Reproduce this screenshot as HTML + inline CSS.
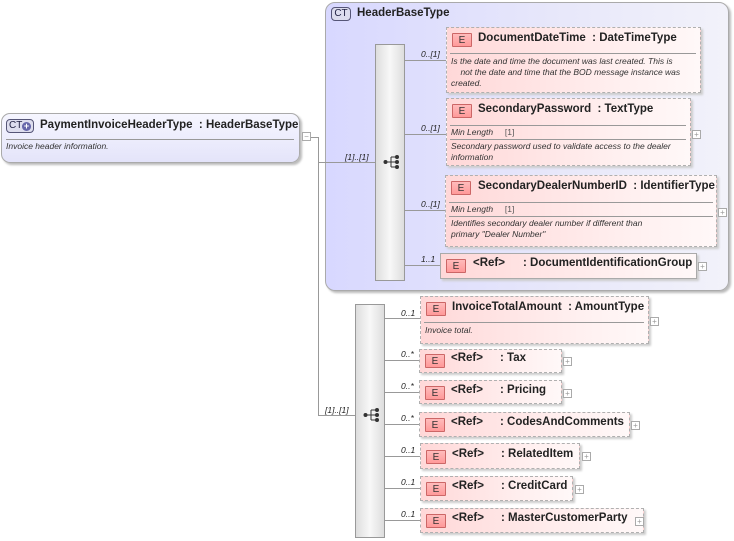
<!DOCTYPE html>
<html><head><meta charset="utf-8"><style>
body{margin:0;width:734px;height:541px;background:#fff;position:relative;overflow:hidden;font-family:"Liberation Sans",Arial,sans-serif;}
.a{position:absolute;}
.ln{position:absolute;background:#999;}
.el{position:absolute;box-sizing:border-box;border:1px dashed #b0b0b0;background:linear-gradient(to right,#ffd8d8,#fff0f0 70%,#fff8f8);box-shadow:2px 2px 2px #ccc;}
.el.s{border-style:solid;border-color:#aaa;}
.E{position:absolute;width:20px;height:14px;box-sizing:border-box;border:1px solid #c66;background:linear-gradient(#fbb,#f99);font-size:10px;text-align:center;line-height:13px;color:#333;border-radius:1px}
.t{position:absolute;font-size:11.5px;font-weight:bold;color:#222;white-space:nowrap;}
.d{position:absolute;font-size:8.5px;font-style:italic;color:#333;line-height:11px;white-space:nowrap;}
.hr{position:absolute;height:1px;background:#999;}
.lab{position:absolute;font-size:8.5px;font-style:italic;color:#222;}
.pl{position:absolute;width:7px;height:7px;border:1px solid #aaa;background:#fff;font-size:8px;line-height:7px;text-align:center;color:#999;}
.seq{position:absolute;box-sizing:border-box;border:1px solid #999;background:linear-gradient(to right,#ddd,#f8f8f8 50%,#ddd);}
</style></head><body>

<!-- root -->
<div class="a" style="left:1px;top:113px;width:299px;height:50px;box-sizing:border-box;border:1px solid #aaa;border-radius:9px;background:linear-gradient(#f6f6ff,#e4e4fa);box-shadow:2px 2px 2px #bbb"></div>
<div class="a" style="left:6px;top:119px;width:28px;height:14px;box-sizing:border-box;border:1px solid #557;border-radius:4px;background:#dde;font-size:10px;line-height:12px;padding-left:2px;color:#224;white-space:nowrap">CT</div>
<div class="a" style="left:22px;top:122px;width:9px;height:9px;border-radius:50%;background:#66a;color:#fff;font-size:9px;line-height:9px;text-align:center;font-weight:bold">+</div>
<div class="t" style="left:40px;top:119px">PaymentInvoiceHeaderType&nbsp; : HeaderBaseType</div>
<div class="hr" style="left:6px;top:139px;width:288px"></div>
<div class="d" style="left:6px;top:141px">Invoice header information.</div>
<div class="pl" style="left:302px;top:132px">−</div>
<div class="ln" style="left:311px;top:137px;width:8px;height:1px"></div>
<div class="ln" style="left:318px;top:137px;width:1px;height:279px"></div>

<!-- HeaderBaseType -->
<div class="a" style="left:325px;top:2px;width:404px;height:289px;box-sizing:border-box;border:1px solid #aaa;border-radius:10px;background:linear-gradient(to right,#d8d8ff,#e8e8fa 60%,#f2f2fa);box-shadow:2px 2px 2px #bbb"></div>
<div class="a" style="left:331px;top:7px;width:20px;height:14px;box-sizing:border-box;border:1px solid #557;border-radius:4px;background:#dde;font-size:10px;line-height:12px;text-align:center;color:#224">CT</div>
<div class="t" style="left:357px;top:7px">HeaderBaseType</div>
<div class="ln" style="left:318px;top:162px;width:57px;height:1px"></div>
<div class="lab" style="left:345px;top:152px">[1]..[1]</div>
<div class="seq" style="left:375px;top:44px;width:30px;height:237px"></div>

<svg class="a" style="left:383px;top:154px" width="18" height="16" viewBox="0 0 18 16"><circle cx="2.5" cy="8" r="2" fill="#333"/><path d="M2 8H8M8 3V13M8 3H14M8 8H14M8 13H14" stroke="#333" fill="none"/><circle cx="14" cy="3" r="2" fill="#333"/><circle cx="14" cy="8" r="2" fill="#333"/><circle cx="14" cy="13" r="2" fill="#333"/></svg>

<!-- DocumentDateTime -->
<div class="ln" style="left:405px;top:60px;width:41px;height:1px"></div>
<div class="lab" style="left:421px;top:49px">0..[1]</div>
<div class="el" style="left:446px;top:27px;width:255px;height:66px"></div>
<div class="E" style="left:452px;top:33px">E</div>
<div class="t" style="left:478px;top:32px">DocumentDateTime&nbsp; : DateTimeType</div>
<div class="hr" style="left:450px;top:53px;width:246px"></div>
<div class="d" style="left:451px;top:56px">Is the date and time the document was last created. This is<br>&nbsp;&nbsp;&nbsp;&nbsp;not the date and time that the BOD message instance was<br>created.</div>

<!-- SecondaryPassword -->
<div class="ln" style="left:405px;top:134px;width:41px;height:1px"></div>
<div class="lab" style="left:421px;top:123px">0..[1]</div>
<div class="el" style="left:446px;top:98px;width:245px;height:68px"></div>
<div class="E" style="left:452px;top:104px">E</div>
<div class="t" style="left:478px;top:103px">SecondaryPassword&nbsp; : TextType</div>
<div class="hr" style="left:450px;top:125px;width:236px"></div>
<div class="d" style="left:451px;top:127px">Min Length&nbsp;&nbsp;&nbsp;&nbsp;&nbsp;<span style="font-style:normal;color:#555">[1]</span></div>
<div class="hr" style="left:450px;top:139px;width:236px"></div>
<div class="d" style="left:451px;top:141px">Secondary password used to validate access to the dealer<br>information</div>
<div class="pl" style="left:692px;top:130px">+</div>

<!-- SecondaryDealerNumberID -->
<div class="ln" style="left:405px;top:210px;width:41px;height:1px"></div>
<div class="lab" style="left:421px;top:199px">0..[1]</div>
<div class="el" style="left:445px;top:175px;width:272px;height:72px"></div>
<div class="E" style="left:451px;top:181px">E</div>
<div class="t" style="left:478px;top:180px">SecondaryDealerNumberID&nbsp; : IdentifierType</div>
<div class="hr" style="left:449px;top:202px;width:264px"></div>
<div class="d" style="left:451px;top:204px">Min Length&nbsp;&nbsp;&nbsp;&nbsp;&nbsp;<span style="font-style:normal;color:#555">[1]</span></div>
<div class="hr" style="left:449px;top:216px;width:264px"></div>
<div class="d" style="left:451px;top:218px">Identifies secondary dealer number if different than<br>primary "Dealer Number"</div>
<div class="pl" style="left:718px;top:208px">+</div>

<!-- DocumentIdentificationGroup -->
<div class="ln" style="left:405px;top:265px;width:35px;height:1px"></div>
<div class="lab" style="left:421px;top:254px">1..1</div>
<div class="el s" style="left:440px;top:253px;width:257px;height:26px"></div>
<div class="E" style="left:446px;top:259px">E</div>
<div class="t" style="left:473px;top:257px">&lt;Ref&gt;</div>
<div class="t" style="left:523px;top:257px">: DocumentIdentificationGroup</div>
<div class="pl" style="left:698px;top:262px">+</div>

<!-- seq 2 -->
<div class="ln" style="left:318px;top:415px;width:37px;height:1px"></div>
<div class="lab" style="left:325px;top:405px">[1]..[1]</div>
<div class="seq" style="left:355px;top:304px;width:30px;height:234px"></div>
<svg class="a" style="left:363px;top:407px" width="18" height="16" viewBox="0 0 18 16"><circle cx="2.5" cy="8" r="2" fill="#333"/><path d="M2 8H8M8 3V13M8 3H14M8 8H14M8 13H14" stroke="#333" fill="none"/><circle cx="14" cy="3" r="2" fill="#333"/><circle cx="14" cy="8" r="2" fill="#333"/><circle cx="14" cy="13" r="2" fill="#333"/></svg>

<!-- InvoiceTotalAmount -->
<div class="ln" style="left:385px;top:318px;width:35px;height:1px"></div>
<div class="lab" style="left:401px;top:308px">0..1</div>
<div class="el" style="left:420px;top:296px;width:229px;height:48px"></div>
<div class="E" style="left:426px;top:302px">E</div>
<div class="t" style="left:452px;top:301px">InvoiceTotalAmount&nbsp; : AmountType</div>
<div class="hr" style="left:424px;top:322px;width:220px"></div>
<div class="d" style="left:425px;top:325px">Invoice total.</div>
<div class="pl" style="left:650px;top:317px">+</div>

<!-- refs -->
<div class="ln" style="left:385px;top:360px;width:35px;height:1px"></div>
<div class="lab" style="left:401px;top:349px">0..*</div>
<div class="el" style="left:419px;top:349px;width:143px;height:24px"></div>
<div class="E" style="left:425px;top:354px">E</div>
<div class="t" style="left:451px;top:352px">&lt;Ref&gt;</div>
<div class="t" style="left:500px;top:352px">: Tax</div>
<div class="pl" style="left:563px;top:357px">+</div>

<div class="ln" style="left:385px;top:392px;width:35px;height:1px"></div>
<div class="lab" style="left:401px;top:381px">0..*</div>
<div class="el" style="left:419px;top:380px;width:143px;height:24px"></div>
<div class="E" style="left:425px;top:386px">E</div>
<div class="t" style="left:451px;top:384px">&lt;Ref&gt;</div>
<div class="t" style="left:500px;top:384px">: Pricing</div>
<div class="pl" style="left:563px;top:389px">+</div>

<div class="ln" style="left:385px;top:424px;width:35px;height:1px"></div>
<div class="lab" style="left:401px;top:413px">0..*</div>
<div class="el" style="left:419px;top:412px;width:211px;height:25px"></div>
<div class="E" style="left:425px;top:418px">E</div>
<div class="t" style="left:451px;top:416px">&lt;Ref&gt;</div>
<div class="t" style="left:500px;top:416px">: CodesAndComments</div>
<div class="pl" style="left:631px;top:421px">+</div>

<div class="ln" style="left:385px;top:456px;width:35px;height:1px"></div>
<div class="lab" style="left:401px;top:445px">0..1</div>
<div class="el" style="left:420px;top:443px;width:160px;height:26px"></div>
<div class="E" style="left:426px;top:450px">E</div>
<div class="t" style="left:452px;top:448px">&lt;Ref&gt;</div>
<div class="t" style="left:501px;top:448px">: RelatedItem</div>
<div class="pl" style="left:582px;top:452px">+</div>

<div class="ln" style="left:385px;top:488px;width:35px;height:1px"></div>
<div class="lab" style="left:401px;top:477px">0..1</div>
<div class="el" style="left:420px;top:476px;width:153px;height:25px"></div>
<div class="E" style="left:426px;top:482px">E</div>
<div class="t" style="left:452px;top:480px">&lt;Ref&gt;</div>
<div class="t" style="left:501px;top:480px">: CreditCard</div>
<div class="pl" style="left:575px;top:485px">+</div>

<div class="ln" style="left:385px;top:520px;width:35px;height:1px"></div>
<div class="lab" style="left:401px;top:509px">0..1</div>
<div class="el" style="left:420px;top:508px;width:224px;height:25px"></div>
<div class="E" style="left:426px;top:514px">E</div>
<div class="t" style="left:452px;top:512px">&lt;Ref&gt;</div>
<div class="t" style="left:501px;top:512px">: MasterCustomerParty</div>
<div class="pl" style="left:635px;top:517px">+</div>

</body></html>
